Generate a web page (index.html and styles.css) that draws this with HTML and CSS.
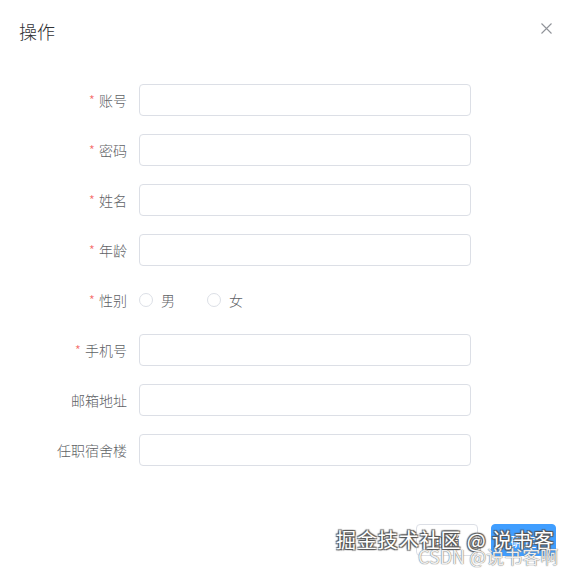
FILE: index.html
```html
<!DOCTYPE html>
<html lang="zh-CN">
<head>
<meta charset="utf-8">
<title>操作</title>
<link rel="stylesheet" href="styles.css">
</head>
<body>
<div class="dialog">
  <div class="dialog-header">
    <span class="dialog-title">操作</span>
    <button class="close-btn" aria-label="关闭">
      <svg width="11" height="11" viewBox="0 0 11 11"><path d="M0.5 0.5 L10.5 10.5 M10.5 0.5 L0.5 10.5" stroke="#909399" stroke-width="1.1" fill="none"/></svg>
    </button>
  </div>
  <div class="dialog-body">
    <form class="form">
      <div class="form-item"><label class="form-label required">账号</label><div class="form-content"><input class="input" type="text"></div></div>
      <div class="form-item"><label class="form-label required">密码</label><div class="form-content"><input class="input" type="password"></div></div>
      <div class="form-item"><label class="form-label required">姓名</label><div class="form-content"><input class="input" type="text"></div></div>
      <div class="form-item"><label class="form-label required">年龄</label><div class="form-content"><input class="input" type="text"></div></div>
      <div class="form-item"><label class="form-label required">性别</label>
        <div class="form-content radios">
          <label class="radio"><span class="radio-circle"></span><span class="radio-text">男</span></label>
          <label class="radio"><span class="radio-circle"></span><span class="radio-text">女</span></label>
        </div>
      </div>
      <div class="form-item"><label class="form-label required">手机号</label><div class="form-content"><input class="input" type="text"></div></div>
      <div class="form-item"><label class="form-label">邮箱地址</label><div class="form-content"><input class="input" type="text"></div></div>
      <div class="form-item"><label class="form-label">任职宿舍楼</label><div class="form-content"><input class="input" type="text"></div></div>
    </form>
  </div>
  <div class="dialog-footer">
    <button class="btn btn-cancel">取消</button>
    <button class="btn btn-primary">确定</button>
  </div>
  <div class="watermark wm-juejin">掘金技术社区 @ 说书客</div>
  <div class="watermark wm-csdn">CSDN @说书客啊</div>
</div>
</body>
</html>
```
FILE: styles.css
```css
* { box-sizing: border-box; }
html, body {
  margin: 0;
  padding: 0;
  background: #fff;
  font-family: "Noto Sans CJK SC", "Liberation Sans", sans-serif;
}
.dialog {
  position: relative;
  width: 571px;
  height: 571px;
  overflow: hidden;
  background: #fff;
}
.dialog-header {
  position: relative;
  padding: 19px 20px 10px 19px;
  height: 54px;
}
.dialog-title {
  display: block;
  font-size: 18px;
  line-height: 24px;
  font-weight: 300;
  color: #303133;
}
.close-btn {
  position: absolute;
  top: 23px;
  right: 19px;
  width: 11px;
  height: 11px;
  padding: 0;
  border: 0;
  background: none;
  display: flex;
}
.dialog-body {
  padding: 30px 20px 30px 39px;
}
.form-item {
  display: flex;
  align-items: center;
  height: 32px;
  margin-bottom: 18px;
}
.form-label {
  width: 100px;
  padding-right: 12px;
  text-align: right;
  font-size: 14px;
  line-height: 32px;
  font-weight: 300;
  color: #606266;
}
.form-label.required::before {
  content: "*";
  color: #f56c6c;
  margin-right: 4px;
}
.form-content {
  display: flex;
  align-items: center;
}
.input {
  width: 332px;
  height: 32px;
  border: 1px solid #dcdfe6;
  border-radius: 4px;
  padding: 0 15px;
  font-size: 13px;
  outline: none;
  background: #fff;
}
.radios {
  gap: 32px;
}
.radio {
  display: flex;
  align-items: center;
  font-size: 14px;
  font-weight: 300;
  color: #606266;
}
.radio-circle {
  width: 14px;
  height: 14px;
  border: 1px solid #dcdfe6;
  border-radius: 50%;
  background: #fff;
}
.radio-text {
  padding-left: 8px;
}
.dialog-footer {
  display: flex;
  justify-content: flex-end;
  gap: 13px;
  padding: 10px 15px 20px 20px;
}
.btn {
  height: 32px;
  border-radius: 4px;
  font-size: 13px;
  font-family: inherit;
  padding: 0;
}
.btn-cancel {
  width: 62px;
  border: 1px solid #dcdfe6;
  background: #fff;
  color: #606266;
}
.btn-primary {
  width: 65px;
  border: 1px solid #409eff;
  background: #409eff;
  color: #fff;
}
.watermark {
  position: absolute;
  white-space: nowrap;
  pointer-events: none;
}
.wm-juejin {
  left: 336px;
  top: 527px;
  font-size: 20px;
  line-height: 26px;
  letter-spacing: 0.9px;
  color: #fff;
  text-shadow: 1px 1px 1px #555, -1px -1px 1px #555, 1px -1px 1px #555, -1px 1px 1px #555;
}
.wm-csdn {
  left: 418px;
  top: 545px;
  font-size: 18px;
  line-height: 22px;
  color: rgba(255,255,255,0.9);
  text-shadow: 0 0 1px #777, 0 0 1px #777;
}
```
